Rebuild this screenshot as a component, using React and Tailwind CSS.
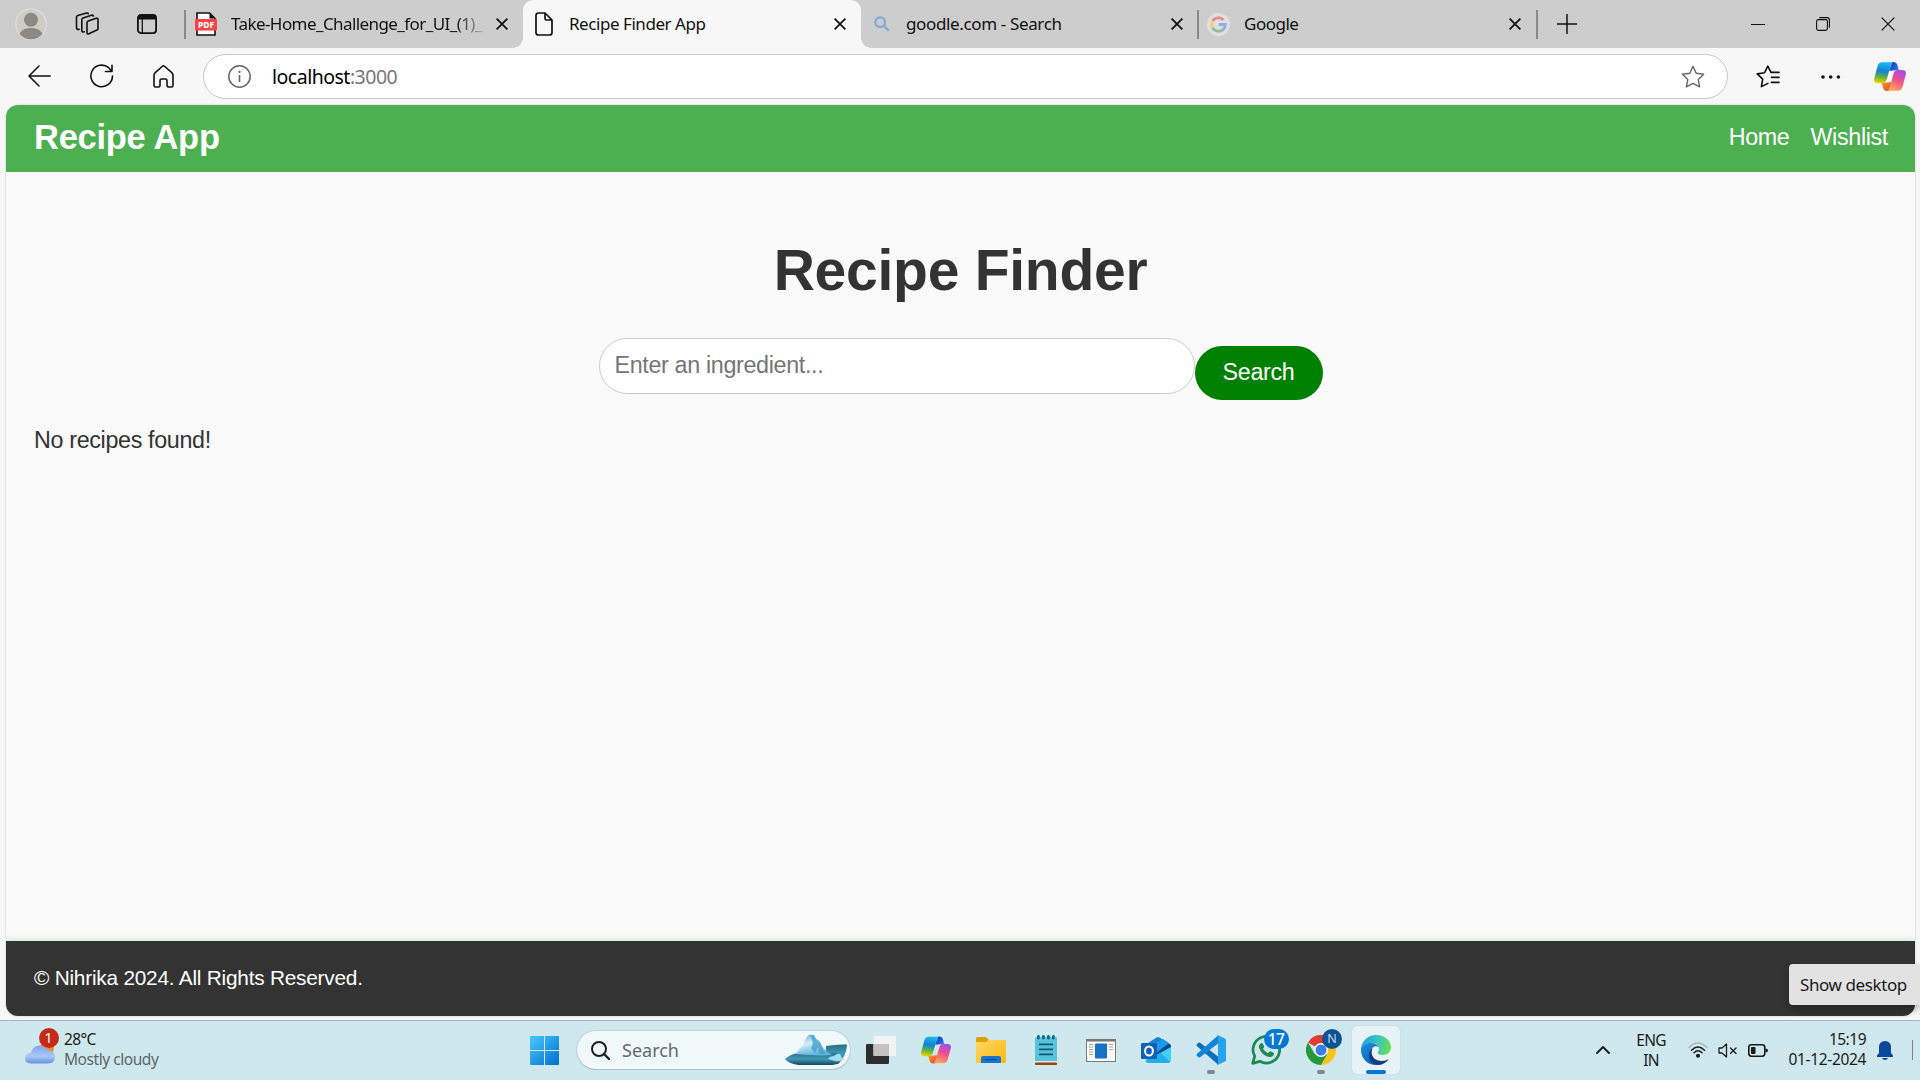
import React from "react";

function Close({ size = 12, sw = 1.8 }) {
  return (
    <svg width={size} height={size} viewBox="0 0 12 12" fill="none" stroke="#111" strokeWidth={sw} className="shrink-0">
      <path d="M.6.6l10.8 10.8M11.4.6L.6 11.4" />
    </svg>
  );
}

function Copilot({ id, className }) {
  return (
    <svg viewBox="0 0 32 29" className={className}>
      <defs>
        <linearGradient id={`${id}a`} x1="0.4" y1="0" x2="0.25" y2="1">
          <stop offset="0" stopColor="#19b7f0" />
          <stop offset=".4" stopColor="#1280d8" />
          <stop offset=".7" stopColor="#5fb53c" />
          <stop offset="1" stopColor="#ffd000" />
        </linearGradient>
        <linearGradient id={`${id}b`} x1="0.8" y1="0" x2="0.4" y2="1">
          <stop offset="0" stopColor="#a14bf0" />
          <stop offset=".5" stopColor="#ee5089" />
          <stop offset="1" stopColor="#ffa65c" />
        </linearGradient>
        <linearGradient id={`${id}c`} x1="0" y1="0" x2="1" y2="1">
          <stop offset="0" stopColor="#0b35b8" />
          <stop offset="1" stopColor="#2a7df0" />
        </linearGradient>
        <linearGradient id={`${id}d`} x1="0" y1="0" x2="1" y2="1">
          <stop offset="0" stopColor="#f59b2c" />
          <stop offset="1" stopColor="#e8402c" />
        </linearGradient>
      </defs>
      <path d="M15 9l3.200-9h1.500q2.800 0 3.500 2.600l1.500 5.400z" fill={`url(#${id}c)`} />
      <path d="M18 20l-3.200 9h-2q-2.800 0-3.500-2.600L7.800 21z" fill={`url(#${id}d)`} />
      <path d="M8 .3h11.500q-2 .4-2.800 3.200l-4 14q-1 3.700-4.500 3.700H4q-5 0-3.700-5L3.600 4Q4.700.3 8 .3z" fill={`url(#${id}a)`} />
      <path d="M24 28.700H12.800q2-.4 2.800-3.200l4-14q1-3.500 4.300-3.500H28q5 0 3.700 5l-3.300 12q-1.100 3.700-4.400 3.700z" fill={`url(#${id}b)`} />
    </svg>
  );
}

function TabDivider() {
  return <div className="h-[29px] w-0.5 shrink-0 bg-[#8a8a8a]" />;
}

function TabStrip() {
  return (
    <div className="flex h-12 items-center bg-[#cdcdcd] text-[17px] text-[#111]">
      <div className="flex w-[184px] shrink-0 items-center pl-[15px]">
        <svg width="32" height="32" viewBox="0 0 32 32">
          <circle cx="16" cy="16" r="15.200" fill="#cfccc6" stroke="#dfdedb" strokeWidth="1.200" />
          <circle cx="16" cy="11.800" r="7" fill="#8c8884" />
          <path d="M4.500 26c2-4 6-6 11.500-6s9.500 2 11.500 6a15 15 0 0 1-23 0z" fill="#8c8884" />
        </svg>
        <svg width="24" height="24" viewBox="0 0 24 24" fill="none" stroke="#111" strokeWidth="1.600" strokeLinecap="round" strokeLinejoin="round" className="ml-[28px]">
          <path d="M12 10.500q0-1.200 1.200-1.600l8-2.600q1.800-.5 1.800 1.200v9q0 1.100-1.100 1.600l-8 3.700Q12 22.500 12 20.800z" />
          <path d="M9.200 19.800q-2.400.6-2.400-1.400V7.600q0-1.300 1.200-1.700l8.500-2.700q1.400-.4 1.800.8" />
          <path d="M4.200 17.200Q1.500 18 1.500 15.800V5.300q0-1.400 1.300-1.800l8.800-2.400q1.300-.3 1.700.6" />
        </svg>
        <svg width="20" height="20" viewBox="0 0 20 20" className="ml-[38px]">
          <rect x=".9" y=".9" width="18.200" height="18.200" rx="3" fill="none" stroke="#111" strokeWidth="1.800" />
          <path d="M1 5.600V3q0-2 2-2h14q2 0 2 2v2.600z" fill="#111" />
          <path d="M5.300 5v14" stroke="#111" strokeWidth="1.300" />
        </svg>
      </div>
      <TabDivider />
      <div className="flex w-[337px] shrink-0 items-center pl-[9px]">
        <svg width="22" height="24" viewBox="0 0 22 24" className="shrink-0">
          <path d="M2 1h12.500L20 6.500V23H2z" fill="#fff" stroke="#111" strokeWidth="1.600" />
          <path d="M14.500 1v5.500H20z" fill="#111" />
          <rect y="7" width="22" height="11.500" rx="1" fill="#ff4242" />
          <text x="11" y="16" fontSize="8.500" fontWeight="800" fill="#fff" textAnchor="middle" fontFamily="Noto Sans, sans-serif">PDF</text>
        </svg>
        <div className="ml-[14px] w-[256px] whitespace-nowrap tracking-[-0.58px] [mask-image:linear-gradient(to_right,black_88%,transparent)]">
          Take-Home_Challenge_for_UI_(1)_
        </div>
        <div className="ml-[9px]"><Close /></div>
      </div>
      <div className="relative flex h-12 w-[338px] shrink-0 items-center rounded-t-[10px] bg-[#f7f7f7] pl-3">
        <div className="absolute bottom-0 -left-[10px] h-[10px] w-[10px] bg-[radial-gradient(circle_at_top_left,transparent_9.5px,#f7f7f7_10px)]" />
        <div className="absolute -right-[10px] bottom-0 h-[10px] w-[10px] bg-[radial-gradient(circle_at_top_right,transparent_9.5px,#f7f7f7_10px)]" />
        <svg width="18" height="24" viewBox="0 0 18 24" fill="none" stroke="#111" strokeWidth="1.700" strokeLinejoin="round">
          <path d="M3 1h7l7 7v12.500q0 2.500-2.500 2.500h-11Q1 23 1 20.500V3.500Q1 1 3.500 1zM10 1v5.500Q10 8 11.500 8H17" />
        </svg>
        <div className="ml-[16px] w-[258px] tracking-[-0.45px] whitespace-nowrap">Recipe Finder App</div>
        <div className="ml-[7px]"><Close /></div>
      </div>
      <div className="flex w-[336px] shrink-0 items-center pl-[13px]">
        <svg width="16" height="16" viewBox="0 0 16 16" fill="none" stroke="#84abd4" strokeWidth="2.400">
          <circle cx="6.200" cy="6.200" r="4.800" />
          <path d="M9.700 9.700l5 5" />
        </svg>
        <div className="ml-[16px] w-[260px] tracking-[-0.36px] whitespace-nowrap">goodle.com - Search</div>
        <div className="ml-[5px]"><Close /></div>
      </div>
      <TabDivider />
      <div className="flex w-[337px] shrink-0 items-center pl-[8px]">
        <svg width="23" height="23" viewBox="0 0 23 23" fill="none" strokeWidth="2.900">
          <circle cx="11.500" cy="11.500" r="11.500" fill="#e0e0e0" />
          <path d="M16.400 6.900A6.900 6.900 0 0 0 5.600 8.100" stroke="#dc918c" />
          <path d="M5.600 8.100a6.900 6.900 0 0 0 0 6.800" stroke="#ecd07a" />
          <path d="M5.600 14.900a6.900 6.900 0 0 0 10.200 1.900" stroke="#8abf98" />
          <path d="M15.800 16.800a6.900 6.900 0 0 0 2.500-5.300H11.700" stroke="#8eaee6" />
        </svg>
        <div className="ml-[14px] w-[260px] tracking-[-0.5px] whitespace-nowrap">Google</div>
        <div className="ml-[5px]"><Close /></div>
      </div>
      <TabDivider />
      <svg width="20" height="20" viewBox="0 0 20 20" stroke="#111" strokeWidth="1.500" className="ml-[19px]">
        <path d="M10 0v20M0 10h20" />
      </svg>
      <div className="ml-auto flex items-center pr-[25px]">
        <div className="h-px w-[14px] bg-[#111]" />
        <svg width="14" height="14" viewBox="0 0 14 14" fill="none" stroke="#111" strokeWidth="1.100" className="ml-[51px]">
          <rect x=".6" y="2.600" width="10.800" height="10.800" rx="1.800" />
          <path d="M3.300.6H11q2.400 0 2.400 2.400v7.700" />
        </svg>
        <div className="ml-[51px]"><Close size={14} sw={1} /></div>
      </div>
    </div>
  );
}

function Toolbar() {
  return (
    <div className="flex h-[57px] items-center bg-[#f7f7f7]">
      <div className="flex w-[203px] shrink-0 items-center pb-px pl-7">
        <svg width="23" height="22" viewBox="0 0 23 22" fill="none" stroke="#111" strokeWidth="1.500" strokeLinecap="round" strokeLinejoin="round">
          <path d="M22.200 11H1M11 1L1 11l10 10" />
        </svg>
        <svg width="24" height="24" viewBox="0 0 24 24" fill="none" stroke="#111" strokeWidth="1.600" strokeLinecap="round" strokeLinejoin="round" className="ml-[39px]">
          <path d="M22.500 12A10.800 10.800 0 1 1 18.700 3.700L21.500 7M22 1.200V7.500h-6.500" />
        </svg>
        <svg width="21" height="23" viewBox="0 0 21 23" fill="none" stroke="#111" strokeWidth="1.600" strokeLinejoin="round" className="ml-[39px]">
          <path d="M9.200 1.500q1.300-1.100 2.600 0l7 6.200q1.200 1 1.200 2.600V20.500q0 1.500-1.500 1.500h-3q-1.500 0-1.500-1.500v-5q0-1.500-1.500-1.500h-4Q7 14 7 15.500v5Q7 22 5.500 22h-3Q1 22 1 20.500V10.300Q1 8.700 2.200 7.700z" />
        </svg>
      </div>
      <div className="flex h-[45px] w-[1525px] shrink-0 items-center rounded-full border border-[#c8c8c8] bg-white pl-6">
        <svg width="23" height="23" viewBox="0 0 23 23" fill="none" stroke="#666" strokeWidth="1.500">
          <circle cx="11.500" cy="11.500" r="10.700" />
          <path d="M11.500 10v7" strokeWidth="1.600" />
          <circle cx="11.500" cy="6.900" r="1.100" fill="#666" stroke="none" />
        </svg>
        <div className="ml-[21px] text-[19.500px] tracking-[-0.5px] text-black">
          localhost<span className="text-[#777]">:3000</span>
        </div>
        <svg width="24" height="24" viewBox="0 0 24 24" fill="none" stroke="#666" strokeWidth="1.400" strokeLinejoin="round" className="mr-[22px] ml-auto">
          <path d="M12 1.300l3.200 6.900 7.500 1-5.500 5.200 1.400 7.500L12 18.400l-6.600 3.500 1.400-7.500L1.300 9.200l7.500-1z" />
        </svg>
      </div>
      <svg width="24" height="23" viewBox="0 0 24 23" fill="none" stroke="#111" strokeWidth="1.600" strokeLinecap="round" strokeLinejoin="round" className="mb-px ml-[28px]">
        <path d="M15 7.400l-3.200-6.200-3.200 6.500L1.200 8.900l5.500 5.200-1.300 7.500 6.500-3.200" />
        <path d="M15.500 7.400h7.500M15.500 12.400h7.500M15.500 17.400h7.500" />
      </svg>
      <svg width="20" height="4" viewBox="0 0 20 4" fill="#111" className="ml-[41px]">
        <circle cx="2" cy="2" r="1.800" />
        <circle cx="9.700" cy="2" r="1.800" />
        <circle cx="17.400" cy="2" r="1.800" />
      </svg>
      <Copilot id="tb" className="mb-px ml-[33px] h-[29px] w-8" />
    </div>
  );
}

function Page() {
  return (
    <div className="h-[915px] bg-[#f7f7f7] pr-[5px] pl-[6px] font-['Liberation_Sans',Arial,sans-serif] text-[23.300px] tracking-[-0.340px] text-[#333]">
      <div className="flex h-[911px] flex-col overflow-hidden rounded-xl bg-[#f9f9f9] shadow-[0_0_2px_rgba(0,0,0,0.25)]">
        <header className="flex h-[67px] shrink-0 items-center justify-between bg-[#4caf50] pr-[27px] pb-0.5 pl-7 text-white">
          <div className="text-[34.500px] font-bold tracking-[-0.280px]">Recipe App</div>
          <nav className="flex gap-[21px]">
            <a>Home</a>
            <a>Wishlist</a>
          </nav>
        </header>
        <main className="flex grow flex-col px-7">
          <h1 className="mt-[66px] text-center text-[57px] leading-[64px] font-bold tracking-[-0.250px]">Recipe Finder</h1>
          <div className="mt-9 flex items-start justify-center">
            <div className="flex h-14 w-[596px] items-center rounded-full border border-[#ccc] bg-white px-[15px] pb-px text-[#757575]">
              Enter an ingredient...
            </div>
            <div className="mt-2 flex h-[54px] w-32 items-center justify-center rounded-full bg-[#008000] pb-0.5 text-white">
              Search
            </div>
          </div>
          <p className="mt-[23px] leading-[34px]">No recipes found!</p>
        </main>
        <footer className="flex h-[75px] shrink-0 items-center bg-[#333] px-7 pb-0.5 text-[20.800px] tracking-[-0.220px] text-white shadow-[0_-1px_6px_rgba(76,175,80,0.25)]">
          © Nihrika 2024. All Rights Reserved.
        </footer>
      </div>
    </div>
  );
}

function Iceberg() {
  return (
    <svg width="62" height="32" viewBox="0 0 62 32">
      <defs>
        <linearGradient id="sea" x1="0" y1="0" x2="0" y2="1">
          <stop offset="0" stopColor="#2a6f88" />
          <stop offset=".5" stopColor="#3c9db3" />
          <stop offset="1" stopColor="#1d3f66" />
        </linearGradient>
        <linearGradient id="ice" x1="0" y1="0" x2="0.3" y2="1">
          <stop offset="0" stopColor="#6fa8cf" />
          <stop offset=".5" stopColor="#d3f0fb" />
          <stop offset="1" stopColor="#63b4da" />
        </linearGradient>
      </defs>
      <path d="M41 12q10-2 21-1.500-.5 12-9 19.500l-12-2z" fill="url(#sea)" />
      <path d="M0 25q4-4 12-6h40q6 5 2 10-3 2-10 2H14Q4 30 0 25z" fill="url(#sea)" />
      <path d="M10 20q3-2 5-6 2-1 4-5 2-7 6-8.500 4 .5 5 4l4 2q2 2 4 7l5 5q3 1 4 2-10 2-37-.5z" fill="url(#ice)" />
      <path d="M25 1q5 8 1 13l4 5 3-6 1 7h6l-5-12-4-3-2-4z" fill="#3d9ccb" opacity=".75" />
      <path d="M43 25q2-3 6-3 3-3 6-2 1 3 4 5-4 3-9 2z" fill="#9cdcf4" />
    </svg>
  );
}

function TaskItem({ children, running }) {
  return (
    <div className="relative flex h-12 w-[55px] shrink-0 items-center justify-center">
      {children}
      {running && <div className="absolute bottom-0 left-[23.500px] h-1 w-2 rounded-full bg-[#7d8a8e]" />}
    </div>
  );
}

function Taskbar() {
  return (
    <div className="flex h-[60px] items-start border-t border-[#a3b4bb] bg-[#cfe8ee] pt-[5px] text-[15.500px] leading-5 text-[#1b1b1b]">
      <div className="flex h-12 w-[530px] shrink-0 items-center pl-[25px]">
        <div className="relative h-[42px] w-[30px]">
          <svg width="30" height="42" viewBox="0 0 30 42">
            <defs>
              <linearGradient id="cloud" x1="0" y1="0" x2="0" y2="1">
                <stop offset="0" stopColor="#7fa3ea" />
                <stop offset=".6" stopColor="#a9c8f7" />
                <stop offset="1" stopColor="#6692e4" />
              </linearGradient>
            </defs>
            <circle cx="22" cy="19" r="7" fill="#f08a24" />
            <path d="M7 34.500q-7 0-7-5t6-5.500q1.500-7.500 9-7.500 5.500 0 7.500 4.500 7.500.5 7.500 7 0 6.500-7 6.500z" fill="url(#cloud)" />
          </svg>
          <div className="absolute -top-px left-[13.500px] flex h-5 w-5 items-center justify-center rounded-full bg-[#c42b1c] text-[14px] text-white">1</div>
        </div>
        <div className="mb-0.5 ml-[9px] whitespace-nowrap">
          <div className="tracking-[-0.6px]">28°C</div>
          <div className="tracking-[-0.45px] text-[#5a666a]">Mostly cloudy</div>
        </div>
      </div>
      <div className="flex h-12 shrink-0 items-center">
        <svg width="29" height="29" viewBox="0 0 29 29">
          <defs>
            <linearGradient id="win" x1="0" y1="0" x2="29" y2="29" gradientUnits="userSpaceOnUse">
              <stop offset="0" stopColor="#4cc8fb" />
              <stop offset="1" stopColor="#006fd0" />
            </linearGradient>
          </defs>
          <path d="M1 0h13v14H0V1q0-1 1-1zM15 0h13q1 0 1 1v13H15zM0 15h14v14H1q-1 0-1-1zM15 15h14v13q0 1-1 1H15z" fill="url(#win)" />
        </svg>
        <div className="ml-[18px] flex h-[38px] w-[273px] items-center rounded-full bg-[#f0f8fa] pr-[3px] pl-[14px] shadow-[0_0_0_1px_rgba(170,195,205,0.5),0_1px_0_rgba(130,150,160,0.5)]">
          <svg width="19" height="19" viewBox="0 0 19 19" fill="none" stroke="#1f1f1f" strokeWidth="2" strokeLinecap="round">
            <circle cx="8" cy="8" r="7" />
            <path d="M13 13l5 5" strokeWidth="2.400" />
          </svg>
          <div className="ml-3 text-[18px] text-[#5f6b6e]">Search</div>
          <div className="ml-auto"><Iceberg /></div>
        </div>
      </div>
      <div className="ml-[3.500px] flex h-12 shrink-0">
        <TaskItem>
          <svg width="30" height="28" viewBox="0 0 30 28">
            <rect y="8" width="23" height="20" rx="1.200" fill="#2d2d2d" />
            <rect x="7.500" y="0" width="22.500" height="20" rx="1.200" fill="#f3f3f3" />
            <rect x="7.500" y="8" width="15.500" height="12" fill="#c2c2c2" />
          </svg>
        </TaskItem>
        <TaskItem><Copilot id="tk" className="h-7 w-[30px]" /></TaskItem>
        <TaskItem>
          <svg width="30" height="26" viewBox="0 0 30 26">
            <defs>
              <linearGradient id="fold" x1="0" y1="0" x2="1" y2="1">
                <stop offset="0" stopColor="#ffd766" />
                <stop offset="1" stopColor="#fcb910" />
              </linearGradient>
            </defs>
            <path d="M0 6V1.500Q0 0 1.500 0H9q1 0 2 1l2 2v4z" fill="#dfa000" />
            <path d="M0 5h10l2.500-2H29q1 0 1 1v22H0z" fill="url(#fold)" />
            <path d="M5 26v-5q0-2 2-2h16q2 0 2 2v5z" fill="#1775cf" />
            <path d="M9 22.500h12" stroke="#0c4f97" strokeWidth="1.300" />
          </svg>
        </TaskItem>
        <TaskItem>
          <svg width="22" height="30" viewBox="0 0 22 30">
            <rect x="0" y="2" width="22" height="25" rx="1.500" fill="#58c3dc" />
            <rect x="0" y="26" width="22" height="1.600" fill="#e8e8e8" />
            <rect x="0" y="27.600" width="22" height="2.400" rx="1" fill="#93460c" />
            <path d="M4 9.300h14M4 14.300h14M4 19.300h14" stroke="#0d5a78" strokeWidth="1.700" />
            <g fill="#0b6a8c">
              <rect x="2" y="0" width="2.800" height="4.500" rx="1.400" />
              <rect x="7" y="0" width="2.800" height="4.500" rx="1.400" />
              <rect x="12" y="0" width="2.800" height="4.500" rx="1.400" />
              <rect x="17" y="0" width="2.800" height="4.500" rx="1.400" />
            </g>
          </svg>
        </TaskItem>
        <TaskItem>
          <svg width="30" height="23" viewBox="0 0 30 23">
            <rect x=".5" y=".5" width="29" height="22" fill="#fafafa" stroke="#7a7a7a" />
            <rect width="30" height="2.500" fill="#7a7672" />
            <rect x="9" y="4.500" width="12" height="15" rx="1" fill="#1472c8" />
            <path d="M3 5.500h4M3 8h4M3 10.500h4M3 13h4M3 15.500h4M23 5.500h4M23 8h4M23 10.500h4" stroke="#a5a5a5" strokeWidth="1" />
          </svg>
        </TaskItem>
        <TaskItem>
          <svg width="30" height="26" viewBox="0 0 30 26">
            <path d="M4 8L15.500.6q1.500-1 3 0L30 8v4L8 18z" fill="#1883d4" />
            <path d="M12 8l10-6 6 4-13 9z" fill="#1b9be8" />
            <path d="M14 17L28 6.500l2 2V12L17 20z" fill="#0c4796" />
            <path d="M30 10v13q0 3-3 3H8q-3 0-3.500-2z" fill="#41d1f5" />
            <path d="M4.500 23L20 16l9 9q-1 1-2 1H8q-3 0-3.500-3z" fill="#22b0ea" />
            <rect y="6" width="16" height="16" rx="1.200" fill="#0f62b8" />
            <ellipse cx="8" cy="14" rx="3.900" ry="4.600" fill="none" stroke="#fff" strokeWidth="2" />
          </svg>
        </TaskItem>
        <TaskItem running>
          <svg width="30" height="30" viewBox="0 0 30 30">
            <path d="M1 9l1.500-1.200q.8-.5 1.600 0L22 21.500V29.500L.8 11q-.8-1 .2-2z" fill="#0a6fbd" />
            <path d="M1 21l1.500 1.200q.8.500 1.600 0L22 8.500V.5L.8 19q-.8 1 .2 2z" fill="#1286d4" />
            <path d="M22 .2l7 3.300q1 .5 1 1.500v20q0 1-1 1.500l-7 3.300q-.8.300-1.400-.4 1.400.4 1.400-1.400V2q0-1.800-1.400-1.400.6-.7 1.400-.4z" fill="#27a3ee" />
          </svg>
        </TaskItem>
        <TaskItem>
          <svg width="30" height="30" viewBox="0 0 30 30">
            <path d="M1.700 28.300l2-7.200a13.300 13.300 0 1 1 5.200 5.200z" fill="none" stroke="#1d8a55" strokeWidth="2.800" strokeLinejoin="round" />
            <path d="M9.500 8.500q1.500-1.200 2.400.3l1.300 2.800q.2.800-1.200 2.200 1.800 3.200 5 4.500l1.500-1.800q.6-.5 1.300-.1l2.800 1.400q.8.500.2 2-1.300 2.700-4.500 2.200-7.500-1.500-10.300-9Q7.500 10 9.500 8.500z" fill="#1d8a55" />
          </svg>
          <div className="absolute top-[3px] left-[25px] flex h-5 w-[25px] items-center justify-center rounded-full bg-[#0078d4] text-[15.500px] font-medium tracking-[-0.6px] text-white">17</div>
        </TaskItem>
        <TaskItem running>
          <svg width="30" height="30" viewBox="0 0 30 30">
            <path d="M15 15L2 7.500A15 15 0 0 1 28 7.500z" fill="#e33b2e" />
            <path d="M28 7.500A15 15 0 0 1 15 30l6.500-11.500L15 8h13z" fill="#fcc31e" />
            <path d="M2 7.500A15 15 0 0 0 15 30l6.500-11.200L15 20l-6.500-1.500z" fill="#27973f" />
            <circle cx="15" cy="15" r="7" fill="#fff" />
            <circle cx="15" cy="15" r="5.500" fill="#3a7de8" />
          </svg>
          <div className="absolute top-[3px] left-[28.500px] flex h-5 w-5 items-center justify-center rounded-full bg-[#0b5394] text-[12.500px] text-[#c5dbee]">N</div>
        </TaskItem>
        <TaskItem>
          <div className="relative flex h-12 w-12 items-center justify-center rounded-[5px] bg-[#e6f3f7] shadow-[0_0_1px_rgba(0,0,0,0.2)]">
            <svg width="30" height="30" viewBox="0 0 30 30">
              <defs>
                <linearGradient id="edgeTop" x1="0" y1="0.3" x2="1" y2="0.4">
                  <stop offset="0" stopColor="#1ea0dc" />
                  <stop offset=".55" stopColor="#38c4c4" />
                  <stop offset="1" stopColor="#6be04e" />
                </linearGradient>
                <linearGradient id="edgeLeft" x1="0" y1="0" x2="0.6" y2="1">
                  <stop offset="0" stopColor="#1b8fdc" />
                  <stop offset="1" stopColor="#0c63b4" />
                </linearGradient>
              </defs>
              <path d="M0 14A15 15 0 0 1 15 0c9 0 15 6 15 12.500 0 4.500-3.500 7.500-8 7.500-3.500 0-5.500-1.200-5.500-2.200s1.500-1.300 1.500-4C18 10.500 14.500 8 10 8 5 8 1 10.500 0 14z" fill="url(#edgeTop)" />
              <path d="M0 14C1 10.500 5 8 9.500 8c4 0 7 1.700 8.200 4-2-1-4-1-5.500.3-4 3.500-3 12.500 5.800 17.400C8 31.500-.5 24 0 14z" fill="url(#edgeLeft)" />
              <path d="M11.500 13.500c-3 7 2.500 12.500 9 12.500 3 0 5-.8 7.200-2C25 28 21 30 17 30 11 29 7.500 25 8 20c.2-3 1.500-5.300 3.500-6.500z" fill="#113d86" />
            </svg>
            <div className="absolute bottom-0 left-[14px] h-1 w-5 rounded-full bg-[#0078d4]" />
          </div>
        </TaskItem>
      </div>
      <div className="ml-auto flex h-12 shrink-0 items-center">
        <svg width="14" height="8" viewBox="0 0 14 8" fill="none" stroke="#1b1b1b" strokeWidth="1.900" strokeLinecap="round">
          <path d="M1 7l6-6 6 6" />
        </svg>
        <div className="mb-px ml-[26px] w-[30px] text-center tracking-[-0.8px]">
          <div>ENG</div>
          <div>IN</div>
        </div>
        <svg width="20" height="16" viewBox="0 0 20 16" fill="none" stroke="#1b1b1b" strokeWidth="1.500" strokeLinecap="round" className="ml-[22px]">
          <path d="M1 5.500q9-9 18 0" stroke="#a5b6bb" />
          <path d="M3.500 8.200q6.500-6.400 13 0M6 10.800q4-4 8 0" />
          <circle cx="10" cy="13.700" r="1.300" fill="#1b1b1b" />
        </svg>
        <svg width="20" height="15" viewBox="0 0 20 15" fill="none" stroke="#1b1b1b" strokeWidth="1.300" strokeLinejoin="round" strokeLinecap="round" className="ml-[10px]">
          <path d="M1 5h3L8.500 1v13L4 10H1zM12.500 5l5.500 5.500M18 5l-5.500 5.500" />
        </svg>
        <svg width="20" height="13" viewBox="0 0 20 13" className="ml-[10px]">
          <rect x=".8" y=".8" width="16" height="11.400" rx="2.600" fill="none" stroke="#1b1b1b" strokeWidth="1.600" />
          <rect x="3" y="3" width="4.500" height="7" rx="1" fill="#1b1b1b" />
          <path d="M17.500 4.500q2.500 0 2.500 2t-2.500 2z" fill="#1b1b1b" />
        </svg>
        <div className="mb-0.5 ml-[18px] w-20 text-right tracking-[-0.5px] whitespace-nowrap">
          <div>15:19</div>
          <div className="tracking-[-0.35px]">01-12-2024</div>
        </div>
        <svg width="16" height="19" viewBox="0 0 16 19" fill="#0b479d" className="ml-[11px]">
          <path d="M8 0q6 0 6 6.500V12l2 2.500V16H0v-1.500L2 12V6.500Q2 0 8 0zM5 17h6q-.8 2-3 2t-3-2z" />
        </svg>
        <div className="mr-[7px] ml-[19px] h-5 w-px bg-[#78868a]" />
      </div>
    </div>
  );
}

export default function App() {
  return (
    <div className="relative h-[1080px] w-[1920px] overflow-hidden bg-[#f7f7f7] font-['Noto_Sans','Open_Sans',sans-serif]">
      <TabStrip />
      <Toolbar />
      <Page />
      <Taskbar />
      <div className="absolute top-[964px] right-0 flex h-[41px] w-[131px] items-center rounded-l-[4px] bg-[#e2e2e2] pl-[11px] text-[17px] tracking-[-0.4px] whitespace-nowrap text-[#1b1b1b] shadow-[0_4px_8px_rgba(0,0,0,0.3)]">
        Show desktop
      </div>
    </div>
  );
}
